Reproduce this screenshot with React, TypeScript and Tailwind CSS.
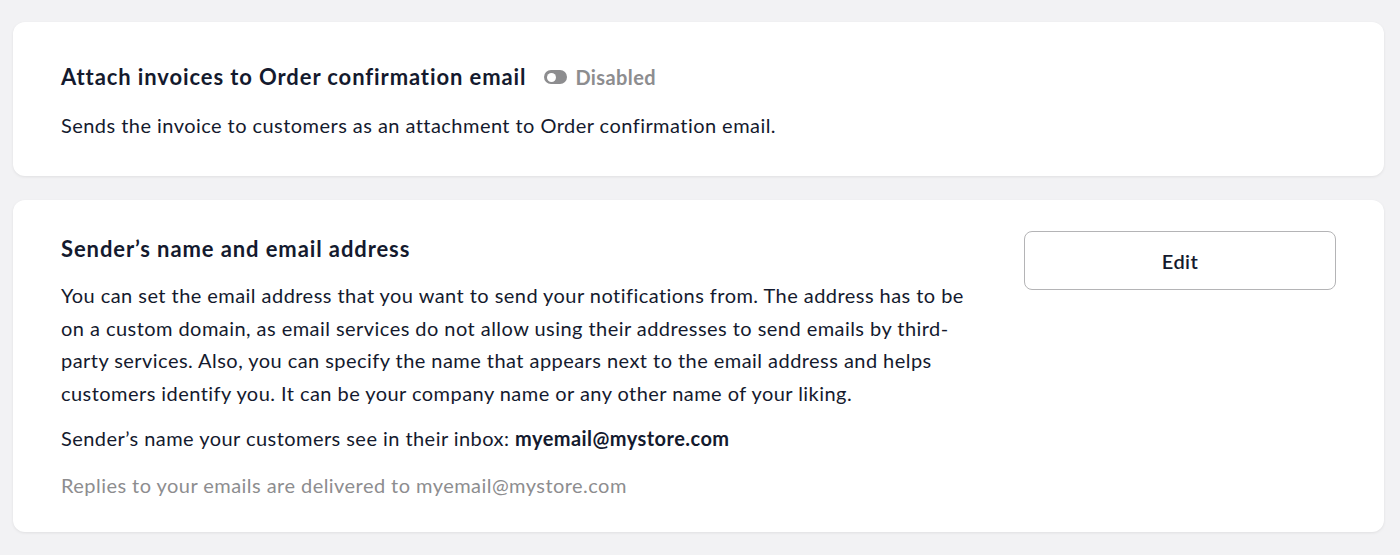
import React from 'react';

/**
 * Notification settings: invoice attachment toggle + sender's name/email card.
 */

const CARD = 'rounded-xl bg-white shadow-[0_1px_3px_rgba(0,0,0,0.08)]';
const BODY = 'text-[20px] tracking-[0.45px]';
const TITLE = 'text-[22px] font-bold leading-[36px] tracking-[0.9px]';

function DisabledToggle() {
  return (
    <span className="flex items-center gap-[8px] text-[20px] font-bold tracking-[0.4px] text-[#8d8d8f]">
      <span className="flex h-[14px] w-[23px] items-center rounded-full bg-[#8d8d8f] px-[3px]">
        <span className="h-[9px] w-[9px] rounded-full bg-white" />
      </span>
      Disabled
    </span>
  );
}

export default function App(): React.JSX.Element {
  return (
    <div className="min-h-[555px] bg-[#f2f2f4] pl-[13px] pr-[16px] pt-[22px] font-['Lato',sans-serif] text-[#141a2e]">
      <div className="flex flex-col gap-[24px]">
        <section className={`${CARD} px-[48px] pb-[34px] pt-[37px]`}>
          <div className="flex items-center gap-[18px]">
            <h2 className={TITLE}>Attach invoices to Order confirmation email</h2>
            <DisabledToggle />
          </div>
          <p className={`mt-[14px] leading-[33px] ${BODY}`}>
            Sends the invoice to customers as an attachment to Order confirmation email.
          </p>
        </section>

        <section className={`${CARD} flex gap-[58px] px-[48px] pb-[30px] pt-[31px]`}>
          <div className="min-w-0 flex-1">
            <h2 className={TITLE}>Sender’s name and email address</h2>
            <p className={`mt-[12px] leading-[32.5px] ${BODY}`}>
              You can set the email address that you want to send your notifications from. The address has to be on a custom domain, as email services do not allow using their addresses to send emails by third-party services. Also, you can specify the name that appears next to the email address and helps customers identify you. It can be your company name or any other name of your liking.
            </p>
            <p className={`mt-[13px] leading-[33px] ${BODY}`}>
              Sender’s name your customers see in their inbox: <span className="font-bold">myemail@mystore.com</span>
            </p>
            <p className={`mt-[14px] leading-[33px] text-[#8d8d8f] ${BODY}`}>
              Replies to your emails are delivered to myemail@mystore.com
            </p>
          </div>
          <div className="shrink-0">
            <button
              type="button"
              className="h-[59px] w-[312px] rounded-[8px] border border-[#b4b4b6] bg-white text-[20px] font-semibold tracking-[0.4px] text-[#141a2e]"
            >
              Edit
            </button>
          </div>
        </section>
      </div>
    </div>
  );
}
